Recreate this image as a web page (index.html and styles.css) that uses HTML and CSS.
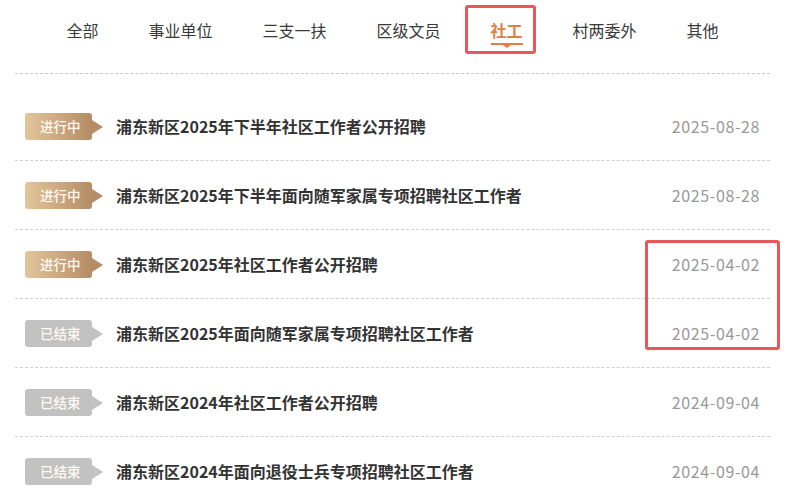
FILE: index.html
```html
<!DOCTYPE html>
<html lang="zh-CN">
<head>
<meta charset="utf-8">
<link rel="stylesheet" href="styles.css">
</head>
<body>
<div class="page">
  <nav class="tabs">
    <span class="tab">全部</span>
    <span class="tab">事业单位</span>
    <span class="tab">三支一扶</span>
    <span class="tab">区级文员</span>
    <span class="tab active">社工</span>
    <span class="tab">村两委外</span>
    <span class="tab">其他</span>
  </nav>
  <ul class="list">
    <li class="row"><span class="badge on">进行中</span><span class="title">浦东新区2025年下半年社区工作者公开招聘</span><span class="date">2025-08-28</span></li>
    <li class="row"><span class="badge on">进行中</span><span class="title">浦东新区2025年下半年面向随军家属专项招聘社区工作者</span><span class="date">2025-08-28</span></li>
    <li class="row"><span class="badge on">进行中</span><span class="title">浦东新区2025年社区工作者公开招聘</span><span class="date">2025-04-02</span></li>
    <li class="row"><span class="badge off">已结束</span><span class="title">浦东新区2025年面向随军家属专项招聘社区工作者</span><span class="date">2025-04-02</span></li>
    <li class="row"><span class="badge off">已结束</span><span class="title">浦东新区2024年社区工作者公开招聘</span><span class="date">2024-09-04</span></li>
    <li class="row"><span class="badge off">已结束</span><span class="title">浦东新区2024年面向退役士兵专项招聘社区工作者</span><span class="date">2024-09-04</span></li>
  </ul>
  <div class="mark mark-tab"></div>
  <div class="mark mark-date"></div>
</div>
</body>
</html>
```

FILE: styles.css
```css
html, body {
  margin: 0;
  padding: 0;
  background: #fff;
}
body {
  font-family: "Noto Sans CJK SC", "Noto Sans", sans-serif;
  color: #333;
  overflow: hidden;
}
.page {
  position: relative;
  width: 801px;
  height: 495px;
  padding: 0 31px 0 15px;
  box-sizing: border-box;
}
.tabs {
  display: flex;
  justify-content: center;
  gap: 50px;
  height: 74px;
  border-bottom: 1px dashed #c8c8c8;
  padding-top: 18px;
  box-sizing: border-box;
}
.tab {
  position: relative;
  font-size: 16px;
  line-height: 24px;
  height: 24px;
  color: #3a3a3a;
}
.tab.active {
  color: #e07f46;
  font-weight: bold;
}
.tab.active::before {
  content: "";
  position: absolute;
  left: 0;
  right: 0;
  top: 25px;
  height: 2px;
  background: #e07f46;
}
.tab.active::after {
  content: "";
  position: absolute;
  left: 50%;
  top: 27px;
  margin-left: -4px;
  border-left: 4px solid transparent;
  border-right: 4px solid transparent;
  border-top: 3px solid #e07f46;
}
.list {
  list-style: none;
  margin: 0;
  padding: 18px 0 0 0;
}
.row {
  display: flex;
  align-items: center;
  height: 68px;
  padding: 0 10px;
  border-bottom: 1px dashed #d0d0d0;
}
.badge {
  position: relative;
  flex: none;
  width: 67px;
  height: 27px;
  line-height: 27px;
  box-sizing: border-box;
  padding-left: 15px;
  font-size: 13.5px;
  font-weight: 500;
  color: #fffaf2;
  border-radius: 3px;
  margin-right: 24px;
}
.badge::after {
  content: "";
  position: absolute;
  right: -11px;
  top: 7px;
  border-top: 7px solid transparent;
  border-bottom: 7px solid transparent;
  border-left: 11px solid #b48c66;
}
.badge.on {
  background: linear-gradient(90deg, #e3c59c 0%, #b48c66 100%);
}
.badge.off {
  background: #c2c2c2;
}
.badge.off::after {
  border-left-color: #c2c2c2;
}
.title {
  flex: 1;
  font-size: 16px;
  font-weight: bold;
  color: #333;
  white-space: nowrap;
}
.date {
  flex: none;
  font-size: 16px;
  letter-spacing: 0.6px;
  color: #999;
}
.mark {
  position: absolute;
  border: 3px solid #e85858;
  border-radius: 3px;
  box-sizing: border-box;
}
.mark-tab {
  left: 465px;
  top: 5px;
  width: 71px;
  height: 49px;
}
.mark-date {
  left: 645px;
  top: 240px;
  width: 135px;
  height: 110px;
}
```
